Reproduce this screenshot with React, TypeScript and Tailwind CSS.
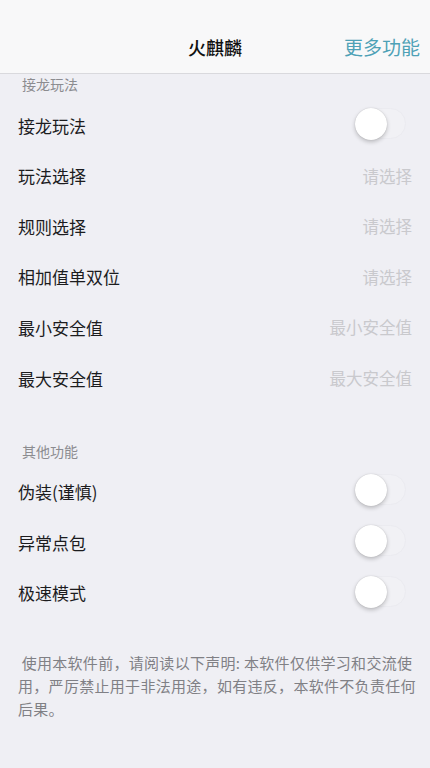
import React, { useState } from 'react';

const font = { fontFamily: '"Noto Sans CJK SC", "Noto Sans", sans-serif' };

const Toggle: React.FC<{ on: boolean; onChange: () => void }> = ({ on, onChange }) => (
    <button
        onClick={onChange}
        className={`relative w-[51px] h-[31px] rounded-full border ${on ? 'bg-[#4cd964] border-[#4cd964]' : 'bg-[#f1f1f5] border-[#ebebf0]'}`}
    >
        <span
            className={`absolute top-[-1px] ${on ? 'left-[19px]' : 'left-[-1px]'} w-[32px] h-[32px] rounded-full bg-white shadow-[0_2px_4px_rgba(0,0,0,0.22),0_0_1px_rgba(0,0,0,0.2)]`}
        />
    </button>
);

const SectionTitle: React.FC<{ text: string }> = ({ text }) => (
    <div className="px-[22px] text-[14px] leading-[20px] text-[#8c8c90]">{text}</div>
);

const Row: React.FC<{ label: string; children?: React.ReactNode }> = ({ label, children }) => (
    <div className="h-[50.6px] flex items-center justify-between pl-[18px] pr-[18px]">
        <span className="text-[17px] text-[#1c1c1e]">{label}</span>
        {children}
    </div>
);

const Placeholder: React.FC<{ text: string }> = ({ text }) => (
    <span className="text-[16.5px] text-[#c9c9cd]">{text}</span>
);

export default function App() {
    const [toggles, setToggles] = useState({ chain: false, disguise: false, abnormal: false, fast: false });
    const flip = (k: keyof typeof toggles) => setToggles(prev => ({ ...prev, [k]: !prev[k] }));

    return (
        <div className="w-[430px] h-[768px] bg-[#efeff4] overflow-hidden" style={font}>
            {/* status bar + nav */}
            <div className="bg-[#f8f8f9] border-b border-[#d9d9dd]">
                <div className="h-[22px]" />
                <div className="h-[51px] relative flex items-center justify-center">
                    <span className="text-[18px] font-medium text-[#111]">火麒麟</span>
                    <span className="absolute right-[10px] text-[19px] text-[#4ea1b6]">更多功能</span>
                </div>
            </div>

            <div>
                <SectionTitle text="接龙玩法" />
                <div className="pt-[6px]">
                    <Row label="接龙玩法">
                        <div className="pr-[6px]">
                            <Toggle on={toggles.chain} onChange={() => flip('chain')} />
                        </div>
                    </Row>
                    <Row label="玩法选择"><Placeholder text="请选择" /></Row>
                    <Row label="规则选择"><Placeholder text="请选择" /></Row>
                    <Row label="相加值单双位"><Placeholder text="请选择" /></Row>
                    <Row label="最小安全值"><Placeholder text="最小安全值" /></Row>
                    <Row label="最大安全值"><Placeholder text="最大安全值" /></Row>
                </div>
            </div>

            <div className="pt-[37px]">
                <SectionTitle text="其他功能" />
                <div className="pt-[6px]">
                    <Row label="伪装(谨慎)">
                        <div className="pr-[6px]"><Toggle on={toggles.disguise} onChange={() => flip('disguise')} /></div>
                    </Row>
                    <Row label="异常点包">
                        <div className="pr-[6px]"><Toggle on={toggles.abnormal} onChange={() => flip('abnormal')} /></div>
                    </Row>
                    <Row label="极速模式">
                        <div className="pr-[6px]"><Toggle on={toggles.fast} onChange={() => flip('fast')} /></div>
                    </Row>
                </div>
            </div>

            <p className="mt-[33px] pl-[18px] pr-[12px] text-[15px] leading-[23px] tracking-[0.3px] text-[#808085]">
                &nbsp;使用本软件前，请阅读以下声明: 本软件仅供学习和交流使用，严厉禁止用于非法用途，如有违反，本软件不负责任何后果。
            </p>
        </div>
    );
}
